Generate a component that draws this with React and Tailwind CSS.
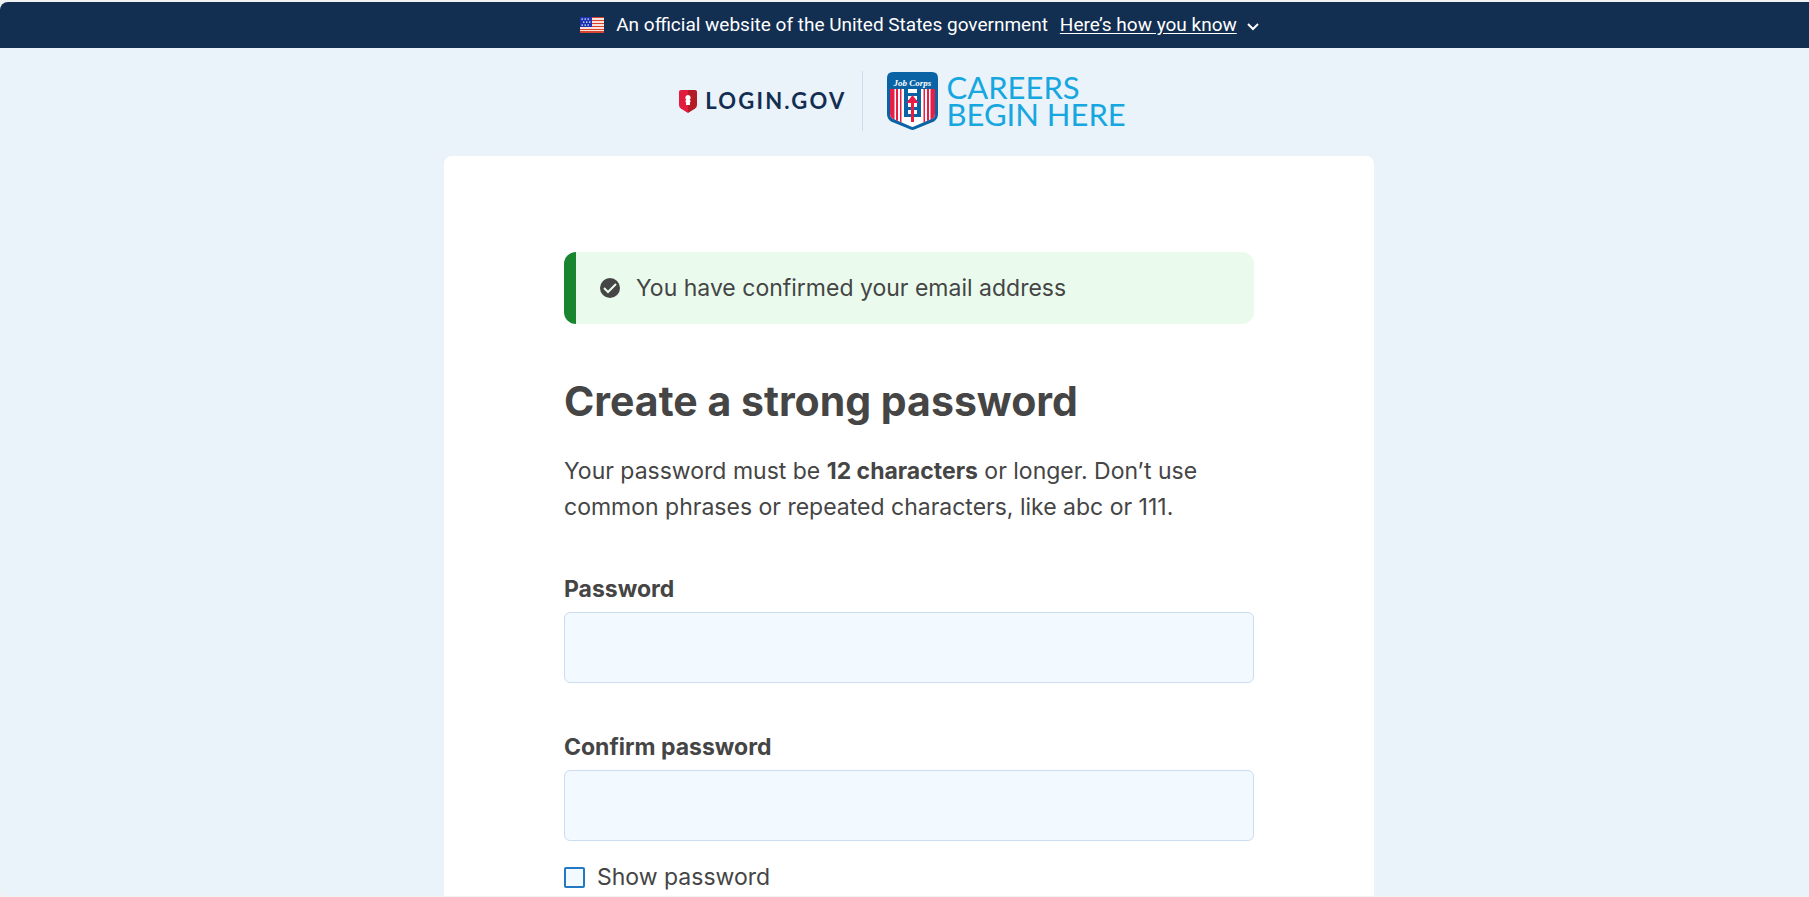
import React from "react";

function Flag() {
  return (
    <svg viewBox="0 0 24 16" className="h-4 w-6" aria-hidden="true">
      <rect width="24" height="16" fill="#fbe3dd" />
      {[0, 3, 6, 9, 12, 14].map((y) => (
        <rect key={y} y={y} width="24" height={y === 14 ? 2 : 1} fill="#d8432c" />
      ))}
      <rect width="12" height="10" fill="#1d33b1" />
      {[2, 5, 8].map((y, r) =>
        [0, 1, 2].map((c) => (
          <rect key={`${y}-${c}`} x={(r === 1 ? 3 : 1.5) + c * 3} y={y - 0.5} width="1.4" height="1.2" fill="#fff" />
        ))
      )}
    </svg>
  );
}

function Shield() {
  return (
    <svg viewBox="0 0 18 23" className="h-[23px] w-[18px]" aria-hidden="true">
      <path d="M9 0H2Q0 0 0 2V15Q0 17 1.800 18.500L9 23Z" fill="#e21c3d" />
      <path d="M9 0H16Q18 0 18 2V15Q18 17 16.200 18.500L9 23Z" fill="#b51d26" />
      <path d="M9 5a2.600 2.600 0 0 1 1.600 4.700l1.200 1.300-.8 1.200V15H7V12.200L6.200 11l1.200-1.300A2.600 2.600 0 0 1 9 5Z" fill="#fff" />
    </svg>
  );
}

function Emblem() {
  return (
    <svg viewBox="0 0 51 58" className="h-[58px] w-[51px]" aria-hidden="true">
      <path d="M6 0H45Q51 0 51 6V42Q51 47 47 49.500L28 57.300Q25.500 58.500 23 57.300L4 49.500Q0 47 0 42V6Q0 0 6 0Z" fill="#0a63a5" />
      <path d="M3 17H48V42Q48 45 45.500 46.500L27 54.500Q25.500 55.300 24 54.500L5.500 46.500Q3 45 3 42Z" fill="#fff" />
      <path d="M3 17h4.500v30.400l-2-.9Q3 45 3 42ZM9 17h2v32l-2-.8ZM13 17h1.500v33.400l-1.500-.6Z" fill="#e91c45" />
      <path d="M48 17h-4.500v30.400l2-.9Q48 45 48 42ZM42 17h-2v32l2-.8ZM38 17h-1.500v33.400l1.500-.6Z" fill="#e91c45" />
      <path d="M17 17h4v28h-4ZM30 17h4v28h-4ZM20 21h11v3H20ZM20 28h11v3H20ZM20 35h11v3H20ZM20 42h11v3H20Z" fill="#0a63a5" />
      <path d="M25.500 23l6 8H27V50h-3V31h-4.500Z" fill="#e91c45" />
      <text x="25.500" y="14" textAnchor="middle" fill="#fff" fontFamily="Liberation Serif, serif" fontStyle="italic" fontWeight="700" fontSize="9">
        Job Corps
      </text>
    </svg>
  );
}

function PasswordField({ id, label }) {
  return (
    <div className="flex flex-col">
      <label htmlFor={id} className="font-bold">
        {label}
      </label>
      <input
        id={id}
        type="password"
        className="mt-[5px] h-[71px] w-full rounded-md border border-[#cddcf0] bg-[#f2f9ff] px-4 outline-none focus:ring-2 focus:ring-[#0071bc]"
      />
    </div>
  );
}

export default function App() {
  return (
    <div className="h-screen overflow-hidden bg-[#f0f1f3] pt-0.5 pb-px font-['Inter','Liberation_Sans',sans-serif] text-[#454545]">
      <div className="flex h-full flex-col overflow-hidden rounded-l-lg bg-[#eaf2fa]">
        <header className="flex h-[46px] shrink-0 items-center justify-center bg-[#122e51] pl-[30px] font-['Roboto','Liberation_Sans',sans-serif] text-[19px] text-white">
          <Flag />
          <p className="ml-3">An official website of the United States government</p>
          <button type="button" className="ml-3 flex items-center gap-2.5">
            <span className="underline underline-offset-2">Here’s how you know</span>
            <svg viewBox="0 0 12 8" className="mt-1 h-2 w-3" fill="none" stroke="#fff" strokeWidth="2" aria-hidden="true">
              <path d="M1 1l5 5 5-5" />
            </svg>
          </button>
        </header>

        <div className="flex h-[106px] shrink-0 items-center justify-center pr-1">
          <a href="#home" className="flex items-center gap-2 font-['Lato',sans-serif] text-[22px] leading-6 font-bold tracking-widest text-[#122e51]">
            <Shield />
            LOGIN.GOV
          </a>
          <div className="ml-4 h-[60px] w-px bg-[#cbdbea]" />
          <div className="ml-6 flex items-center gap-2">
            <Emblem />
            <p className="font-['Lato',sans-serif] text-[31px] leading-[27px] text-[#16a7e0]">
              CAREERS
              <br />
              BEGIN HERE
            </p>
          </div>
        </div>

        <main className="flex grow justify-center overflow-hidden pt-0.5 pl-[9px]">
          <div className="w-full max-w-[930px] rounded-t-lg bg-white px-[120px] pt-24 text-[23px] leading-9">
            <div role="status" className="flex h-[72px] items-center rounded-xl border-l-[12px] border-[#19852f] bg-[#eafbee] pl-6">
              <svg viewBox="0 0 20 20" className="h-5 w-5" aria-hidden="true">
                <circle cx="10" cy="10" r="10" fill="#454545" />
                <path d="M4 10l4 4 8-8" fill="none" stroke="#eafbee" strokeWidth="2" />
              </svg>
              <span className="ml-4">You have confirmed your email address</span>
            </div>
            <h1 className="mt-[53px] text-[41px] leading-[48px] font-bold">Create a strong password</h1>
            <p className="mt-7">
              Your password must be <strong>12 characters</strong> or longer. Don’t use common phrases or repeated
              characters, like abc or 111.
            </p>
            <form className="mt-[46px]">
              <PasswordField id="password" label="Password" />
              <div className="h-[46px]" />
              <PasswordField id="confirm" label="Confirm password" />
              <label className="mt-[18px] flex items-center gap-3">
                <input
                  type="checkbox"
                  className="h-[21px] w-[21px] appearance-none rounded-xs border-2 border-[#2378c3] bg-[#f2f9ff] checked:bg-[#0071bc]"
                />
                Show password
              </label>
            </form>
          </div>
        </main>
      </div>
    </div>
  );
}
